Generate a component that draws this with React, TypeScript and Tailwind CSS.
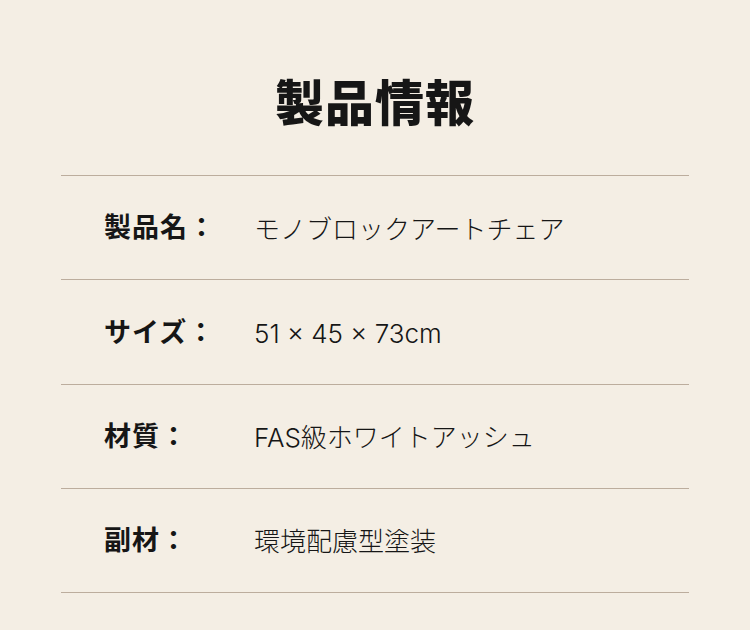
import React from 'react';

type SpecRow = {
    label: string;
    value: string;
};

const specRows: SpecRow[] = [
    { label: '製品名：', value: 'モノブロックアートチェア' },
    { label: 'サイズ：', value: '51 × 45 × 73cm' },
    { label: '材質：', value: 'FAS級ホワイトアッシュ' },
    { label: '副材：', value: '環境配慮型塗装' },
];

const jpFont = "font-['Inter','Noto_Sans_CJK_JP',sans-serif]";

export default function App() {
    return (
        <div className={`min-h-[630px] w-full bg-[#f4eee4] text-[#161616] ${jpFont}`}>
            <div className="mx-auto w-[628px] pt-[68px]">
                <h1 className="h-[72px] text-center text-[49px] font-black leading-[72px] tracking-[1px]">
                    製品情報
                </h1>

                <div className="mt-[35px] border-t border-[#bcad9d]">
                    {specRows.map((row) => (
                        <div
                            key={row.label}
                            className="flex h-[104.25px] items-center border-b border-[#bcad9d] pl-[43px]"
                        >
                            <span className="w-[150px] shrink-0 pt-[2px] text-[27px] font-bold tracking-[1px]">
                                {row.label}
                            </span>
                            <span className="pt-[3px] text-[26px] font-light">{row.value}</span>
                        </div>
                    ))}
                </div>
            </div>
        </div>
    );
}
